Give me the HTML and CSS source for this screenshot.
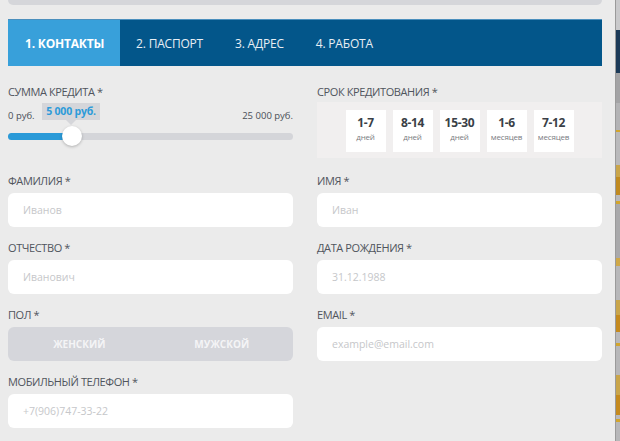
FILE: index.html
```html
<!DOCTYPE html>
<html lang="ru">
<head>
<meta charset="utf-8">
<title>Заявка на кредит</title>
<link rel="stylesheet" href="styles.css">
</head>
<body>
<div class="panel">
  <div class="topbar"></div>
  <nav class="tabs">
    <div class="tab active">1. КОНТАКТЫ</div>
    <div class="tab">2. ПАСПОРТ</div>
    <div class="tab">3. АДРЕС</div>
    <div class="tab">4. РАБОТА</div>
  </nav>
  <form class="form">
    <div class="row row-first">
      <div class="field">
        <div class="label">СУММА КРЕДИТА *</div>
        <div class="scale">
          <span>0 руб.</span>
          <span>25 000 руб.</span>
          <div class="tooltip">5 000 руб.</div>
        </div>
        <div class="track">
          <div class="fill"></div>
          <div class="thumb"></div>
        </div>
      </div>
      <div class="field">
        <div class="label">СРОК КРЕДИТОВАНИЯ *</div>
        <div class="terms">
          <div class="term"><b>1-7</b><span>дней</span></div>
          <div class="term"><b>8-14</b><span>дней</span></div>
          <div class="term"><b>15-30</b><span>дней</span></div>
          <div class="term"><b>1-6</b><span>месяцев</span></div>
          <div class="term"><b>7-12</b><span>месяцев</span></div>
        </div>
      </div>
    </div>
    <div class="row">
      <div class="field">
        <div class="label">ФАМИЛИЯ *</div>
        <input class="input" type="text" placeholder="Иванов">
      </div>
      <div class="field">
        <div class="label">ИМЯ *</div>
        <input class="input" type="text" placeholder="Иван">
      </div>
    </div>
    <div class="row">
      <div class="field">
        <div class="label">ОТЧЕСТВО *</div>
        <input class="input" type="text" placeholder="Иванович">
      </div>
      <div class="field">
        <div class="label">ДАТА РОЖДЕНИЯ *</div>
        <input class="input" type="text" placeholder="31.12.1988">
      </div>
    </div>
    <div class="row">
      <div class="field">
        <div class="label">ПОЛ *</div>
        <div class="toggle">
          <div class="opt">ЖЕНСКИЙ</div>
          <div class="opt">МУЖСКОЙ</div>
        </div>
      </div>
      <div class="field">
        <div class="label">EMAIL *</div>
        <input class="input" type="text" placeholder="example@email.com">
      </div>
    </div>
    <div class="row">
      <div class="field">
        <div class="label">МОБИЛЬНЫЙ ТЕЛЕФОН *</div>
        <input class="input" type="text" placeholder="+7(906)747-33-22">
      </div>
      <div class="field"></div>
    </div>
  </form>
</div>
<div class="backdrop"></div>
</body>
</html>
```

FILE: styles.css
```css
* { box-sizing: border-box; }
html, body { margin: 0; padding: 0; }
body {
  width: 620px;
  height: 441px;
  overflow: hidden;
  display: flex;
  font-family: "Open Sans", "Noto Sans", sans-serif;
  background: #b5b5b5;
}
.panel {
  flex: 0 0 615px;
  height: 441px;
  background: #ebebeb;
  padding: 0 13px 0 8px;
  border-right: 1px solid #9a9a9a;
}
.topbar {
  height: 5px;
  background: #d5d6da;
  border-radius: 0 0 5px 5px;
  margin-bottom: 14px;
}
.tabs {
  height: 47px;
  background: #03568a;
  display: flex;
  align-items: stretch;
  border-top: 1px solid #4b8fbd;
}
.tab {
  display: flex;
  align-items: center;
  padding: 0 16px;
  color: #e8eef4;
  font-size: 12px;
  letter-spacing: -0.2px;
}
.tab.active {
  background: #38a0da;
  color: #ffffff;
  font-weight: 700;
  padding: 0 16px 0 17px;
}
.form {
  display: flex;
  flex-direction: column;
  gap: 14px;
  margin-top: 19px;
}
.row {
  display: grid;
  grid-template-columns: 285px 285px;
  column-gap: 24px;
}
.row-first { margin-bottom: 2px; }
.label {
  font-size: 11px;
  line-height: 14px;
  color: #50555d;
  letter-spacing: -0.4px;
  margin-bottom: 5px;
}
.row-first .label { margin-bottom: 3px; }
.scale {
  position: relative;
  display: flex;
  justify-content: space-between;
  height: 20px;
  padding-top: 8px;
  font-size: 9.5px;
  line-height: 12px;
  color: #4a4f57;
}
.tooltip {
  position: absolute;
  left: 34px;
  top: 1px;
  width: 58px;
  height: 17px;
  background: #d5d6da;
  color: #2d9bd9;
  font-size: 10.5px;
  font-weight: 700;
  line-height: 17px;
  text-align: center;
  letter-spacing: -0.2px;
}
.tooltip::after {
  content: "";
  position: absolute;
  left: 24px;
  top: 17px;
  border-left: 5px solid transparent;
  border-right: 5px solid transparent;
  border-top: 5px solid #d5d6da;
}
.track {
  position: relative;
  height: 7px;
  margin-top: 11px;
  background: #d4d5d9;
  border-radius: 4px;
}
.fill {
  width: 62px;
  height: 7px;
  background: #2a9ad8;
  border-radius: 4px 0 0 4px;
}
.thumb {
  position: absolute;
  left: 54px;
  top: -7px;
  width: 20px;
  height: 20px;
  border-radius: 50%;
  background: #ffffff;
  box-shadow: 0 1px 3px rgba(0,0,0,0.25);
}
.terms {
  height: 56px;
  background: #f1efef;
  display: flex;
  justify-content: center;
  gap: 7px;
  padding-top: 8px;
}
.term {
  width: 40px;
  height: 42px;
  background: #ffffff;
  display: flex;
  flex-direction: column;
  align-items: center;
  padding-top: 6px;
}
.term b {
  font-size: 12px;
  line-height: 14px;
  font-weight: 700;
  color: #3a3f47;
  letter-spacing: -0.3px;
}
.term span {
  margin-top: 2px;
  font-size: 8px;
  line-height: 10px;
  color: #7a7d82;
  letter-spacing: -0.2px;
}
.input {
  display: block;
  width: 100%;
  height: 34px;
  border: none;
  outline: none;
  border-radius: 6px;
  background: #ffffff;
  padding: 0 15px;
  font-family: "Open Sans", "Noto Sans", sans-serif;
  font-size: 10.5px;
  color: #333;
}
.input::placeholder { color: #c6c7ca; }
.toggle {
  display: flex;
  height: 34px;
  background: #d5d6db;
  border-radius: 6px;
}
.opt {
  flex: 1;
  display: flex;
  align-items: center;
  justify-content: center;
  color: #f4f4f6;
  font-size: 10px;
  font-weight: 700;
}
.backdrop {
  flex: 1;
  background: linear-gradient(to bottom,
    #c9c9cb 0, #c9c9cb 30px,
    #1c3a58 30px, #1c3a58 73px,
    #a3a3a5 73px, #a3a3a5 103px,
    #b3b3b5 103px, #b3b3b5 130px,
    #d2a52c 130px, #d2a52c 132px,
    #b9b9bb 132px, #b9b9bb 165px,
    #c9a54a 165px, #c9a54a 177px,
    #c08a20 177px, #c08a20 195px,
    #b9b9bb 195px, #b9b9bb 201px,
    #d2a52c 201px, #d2a52c 204px,
    #a9a9ab 204px, #a9a9ab 258px,
    #cfa848 258px, #cfa848 266px,
    #b7b7b9 266px, #b7b7b9 300px,
    #c9a54a 300px, #c9a54a 315px,
    #c58a1e 315px, #c58a1e 332px,
    #b9b9bb 332px, #b9b9bb 343px,
    #d2a52c 343px, #d2a52c 346px,
    #b7b7b9 346px, #b7b7b9 375px,
    #c9a54a 375px, #c9a54a 395px,
    #c58a1e 395px, #c58a1e 415px,
    #b9b9bb 415px, #b9b9bb 419px,
    #d2a52c 419px, #d2a52c 422px,
    #b7b7b9 422px, #b7b7b9 441px);
}
```
